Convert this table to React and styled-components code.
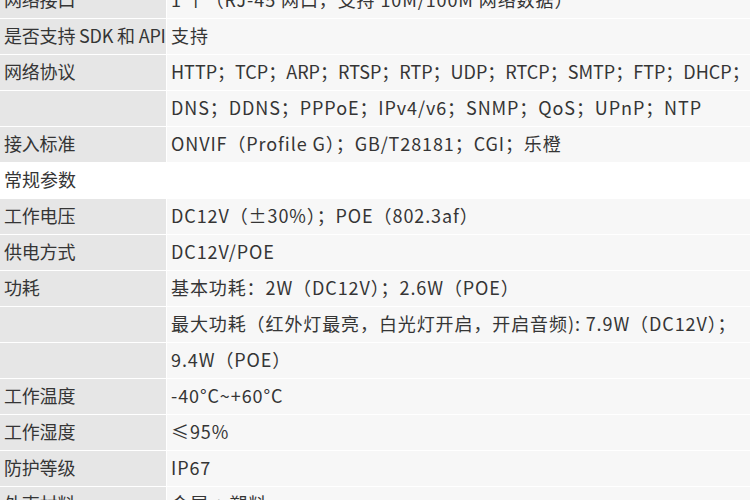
import React from 'react'
import styled, { createGlobalStyle } from 'styled-components'

const GlobalStyle = createGlobalStyle`
  html, body {
    margin: 0;
    padding: 0;
    background: #ffffff;
    overflow: hidden;
  }
  body {
    font-family: "Noto Sans CJK SC", "Noto Sans", sans-serif;
    color: #353535;
  }
`

const Table = styled.div`
  width: 750px;
  margin-top: -17px;
  display: flex;
  flex-direction: column;
  gap: 1px;
`

const Row = styled.div`
  display: grid;
  grid-template-columns: 166px 1fr;
  column-gap: 1px;
  height: 35px;
`

const Label = styled.div`
  background: #e6e6e6;
  padding-left: 4px;
  font-size: 18px;
  line-height: 33px;
  letter-spacing: -0.2px;
  white-space: nowrap;
  overflow: hidden;
`

const Value = styled.div`
  background: #f7f7f7;
  padding-left: 4px;
  font-size: 18px;
  line-height: 33px;
  letter-spacing: ${p => (p.$tight ? '0' : '0.9px')};
  white-space: nowrap;
  overflow: hidden;
`

const Section = styled.div`
  height: 35px;
  background: #ffffff;
  padding-left: 4px;
  font-size: 18px;
  line-height: 33px;
`

const rows = [
  ['网络接口', '1 个（RJ-45 网口，支持 10M/100M 网络数据）'],
  ['是否支持 SDK 和 API', '支持'],
  ['网络协议', 'HTTP；TCP；ARP；RTSP；RTP；UDP；RTCP；SMTP；FTP；DHCP；', true],
  ['', 'DNS；DDNS；PPPoE；IPv4/v6；SNMP；QoS；UPnP；NTP'],
  ['接入标准', 'ONVIF（Profile G）；GB/T28181；CGI；乐橙'],
  { section: '常规参数' },
  ['工作电压', 'DC12V（±30%）；POE（802.3af）'],
  ['供电方式', 'DC12V/POE'],
  ['功耗', '基本功耗：2W（DC12V）；2.6W（POE）'],
  ['', '最大功耗（红外灯最亮，白光灯开启，开启音频): 7.9W（DC12V）；'],
  ['', '9.4W（POE）'],
  ['工作温度', '-40°C~+60°C'],
  ['工作湿度', '≤95%'],
  ['防护等级', 'IP67'],
  ['外壳材料', '金属 + 塑料'],
]

const App = () => (
  <>
    <GlobalStyle />
    <Table>
      {rows.map((r, i) =>
        r.section ? (
          <Section key={i}>{r.section}</Section>
        ) : (
          <Row key={i}>
            <Label>{r[0]}</Label>
            <Value $tight={r[2]}>{r[1]}</Value>
          </Row>
        )
      )}
    </Table>
  </>
)

export default App
